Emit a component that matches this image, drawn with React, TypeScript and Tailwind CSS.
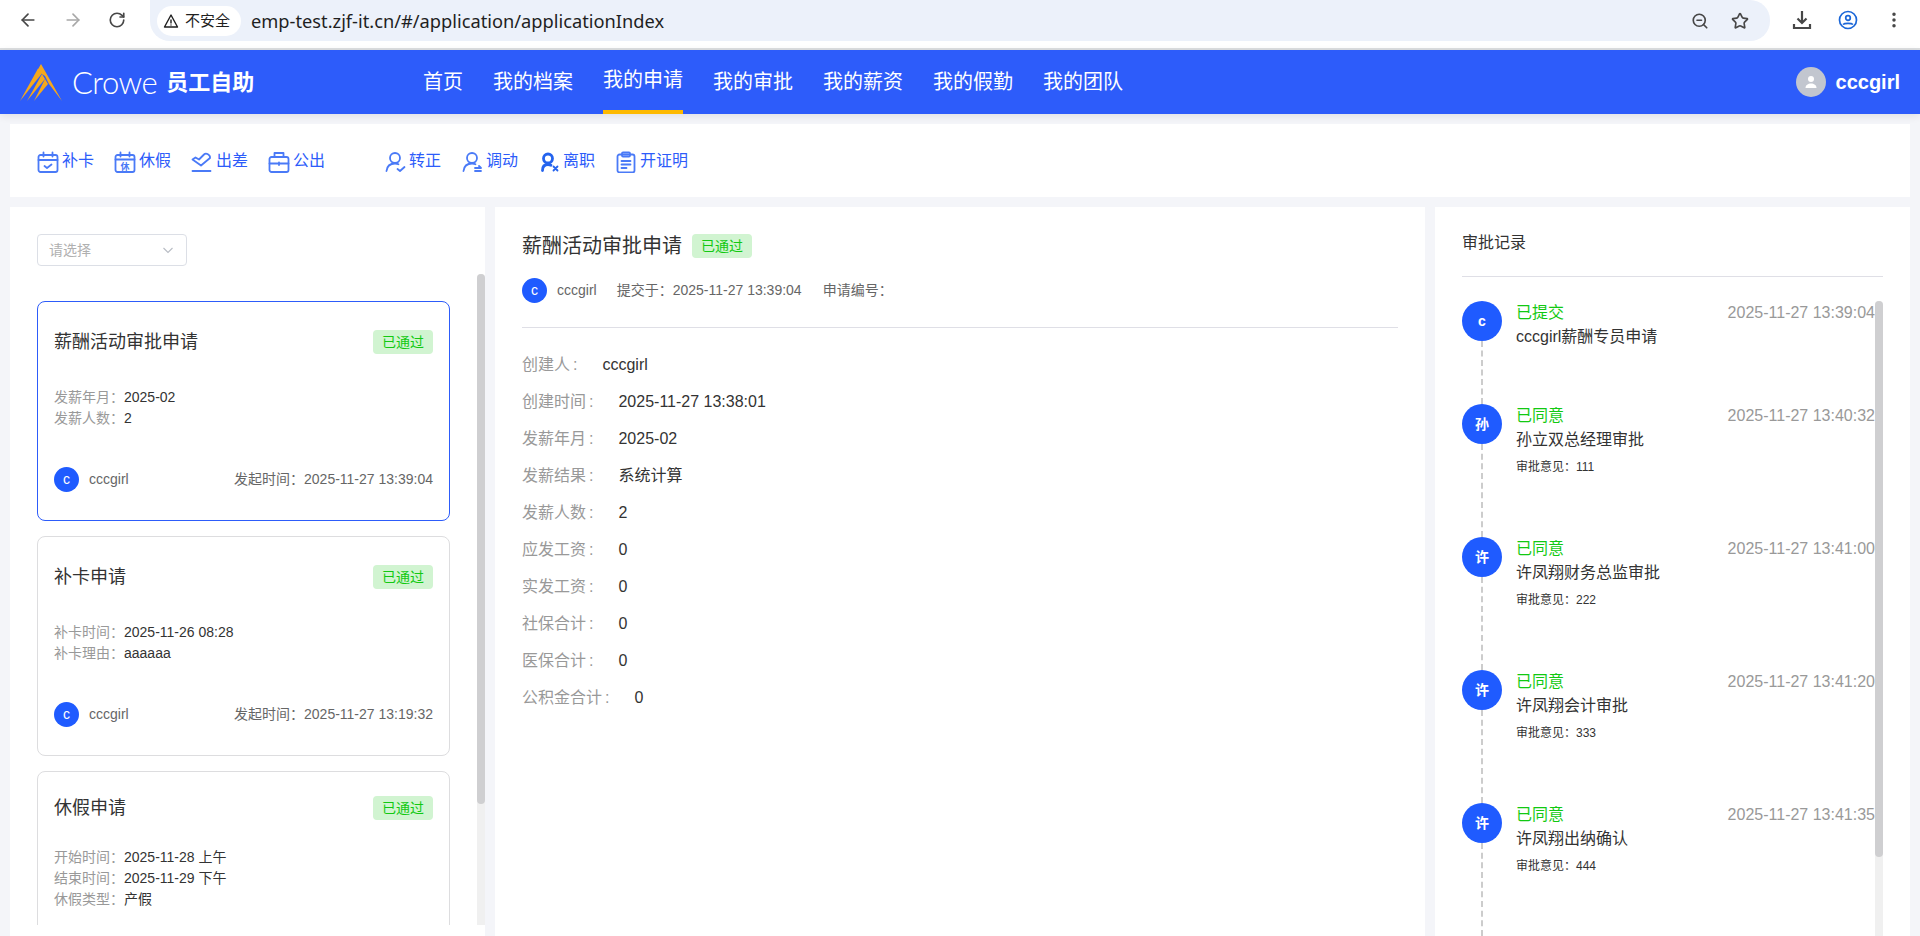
import React from "react";
import { ArrowLeft, ArrowRight, RotateCw, ZoomOut, Star, EllipsisVertical } from "lucide-react";

const Badge = () => (
  <span className="inline-flex h-[24px] w-[60px] shrink-0 items-center justify-center rounded-[4px] bg-[#d1f4d1] text-[14px] text-[#12c912]">
    已通过
  </span>
);

const Avatar = ({ t, big }: { t: string; big?: boolean }) => (
  <span
    className={
      big
        ? "flex h-[40px] w-[40px] shrink-0 items-center justify-center rounded-full bg-[#1f5bff] text-[14px] font-bold text-white"
        : "flex h-[25px] w-[25px] shrink-0 items-center justify-center rounded-full bg-[#1f5bff] text-[14px] text-white"
    }
  >
    {t}
  </span>
);

const Ic = ({ children }: { children: React.ReactNode }) => (
  <svg width="22" height="22" viewBox="0 0 22 22" fill="none" stroke="#4a7af7" strokeWidth="1.800" strokeLinecap="round" strokeLinejoin="round" className="shrink-0">
    {children}
  </svg>
);

const tools1: [string, React.ReactNode][] = [
  ["补卡", <Ic><rect x="1.500" y="4" width="19" height="17" rx="2" /><path d="M1.500 9h19M6.500 1.500v4M15.500 1.500v4M7.500 15l2.500 2 4.500-3.500" /></Ic>],
  ["休假", <Ic><rect x="1.500" y="4" width="19" height="17" rx="2" /><path d="M1.500 8.500h19M6.500 1.500v4M15.500 1.500v4" /><text x="11" y="18.500" textAnchor="middle" fontSize="9" fontWeight="700" fill="#4a7af7" stroke="none">休</text></Ic>],
  ["出差", <Ic><path d="M1.500 8.500L4.500 6.500 8 8.500 13 3.500C15 1.500 19.500 3.500 19 7L10 14.500z" /><path d="M1.500 20h18" /></Ic>],
  ["公出", <Ic><rect x="1.500" y="6" width="19" height="15" rx="2" /><path d="M6.500 6V2h9v4M1.500 12.500h19M11 11.500v2.500" /></Ic>],
];

const tools2: [string, React.ReactNode][] = [
  ["转正", <Ic><circle cx="11" cy="7" r="5" /><path d="M2.500 20c.5-4.500 3.500-7.500 8.500-7.500 1.500 0 2.500.2 3.500.7M13.500 18l2.500 2 4.500-4" /></Ic>],
  ["调动", <Ic><circle cx="11" cy="7" r="5" /><path d="M2.500 20c.5-4.500 3.500-7.500 8.500-7.500 1.500 0 2.500.2 3.500.7M14 17h6l-2-2M20 20h-6" /></Ic>],
  ["离职", <svg width="22" height="22" viewBox="0 0 22 22" fill="none" stroke="#2463ee" strokeWidth="2.800" strokeLinecap="round" strokeLinejoin="round" className="shrink-0"><circle cx="10" cy="7.500" r="4.500" /><path d="M4.500 19.500c0-4 2-6 5.500-6 1 0 2 .2 3 .7" /><path d="M15.500 15.500l4 4M19.500 15.500l-4 4" strokeWidth="1.800" /></svg>],
  ["开证明", <Ic><rect x="2.500" y="3.500" width="17" height="18" rx="2" /><rect x="7" y="1.500" width="8" height="4" rx="1" /><path d="M6.500 10h9M6.500 13.500h9M6.500 17h5" /></Ic>],
];

const Tool = ({ label, icon }: { label: string; icon: React.ReactNode }) => (
  <div className="flex items-center gap-[3px]">
    <span className="mt-[3px] flex">{icon}</span>
    <span className="text-[16px] leading-[22px] text-[#2d5cfa]">{label}</span>
  </div>
);

type Card = {
  title: string;
  lines: [string, string][];
  time?: string;
  active?: boolean;
  tall?: boolean;
};

const cards: Card[] = [
  { title: "薪酬活动审批申请", lines: [["发薪年月", "2025-02"], ["发薪人数", "2"]], time: "2025-11-27 13:39:04", active: true },
  { title: "补卡申请", lines: [["补卡时间", "2025-11-26 08:28"], ["补卡理由", "aaaaaa"]], time: "2025-11-27 13:19:32" },
  { title: "休假申请", lines: [["开始时间", "2025-11-28 上午"], ["结束时间", "2025-11-29 下午"], ["休假类型", "产假"]], tall: true },
];

const ListCard = ({ c }: { c: Card }) => (
  <div
    className={
      (c.active ? "border-[#2d5cfa] " : "border-[#dddddf] ") +
      (c.tall ? "pt-[24px] " : "pt-[28px] ") +
      "flex h-[220px] shrink-0 flex-col rounded-[8px] border bg-white px-[16px] pb-[28px]"
    }
  >
    <div className="flex h-[24px] items-center justify-between">
      <span className="text-[18px] text-[#333333]">{c.title}</span>
      <Badge />
    </div>
    <div className={c.tall ? "mt-[27px]" : "mt-[33px]"}>
      {c.lines.map(([k, v]) => (
        <div key={k} className="text-[14px] leading-[21px]">
          <span className="text-[#999999]">{k}：</span>
          <span className="text-[#333333]">{v}</span>
        </div>
      ))}
    </div>
    {c.time && (
      <div className="mt-auto flex items-center justify-between text-[14px] text-[#666666]">
        <div className="flex items-center gap-[10px]">
          <Avatar t="c" />
          <span>cccgirl</span>
        </div>
        <span>发起时间：{c.time}</span>
      </div>
    )}
  </div>
);

const details: [string, string][] = [
  ["创建人", "cccgirl"],
  ["创建时间", "2025-11-27 13:38:01"],
  ["发薪年月", "2025-02"],
  ["发薪结果", "系统计算"],
  ["发薪人数", "2"],
  ["应发工资", "0"],
  ["实发工资", "0"],
  ["社保合计", "0"],
  ["医保合计", "0"],
  ["公积金合计", "0"],
];

type Rec = { a: string; status: string; time: string; name: string; note?: string };
const records: Rec[] = [
  { a: "c", status: "已提交", time: "2025-11-27 13:39:04", name: "cccgirl薪酬专员申请" },
  { a: "孙", status: "已同意", time: "2025-11-27 13:40:32", name: "孙立双总经理审批", note: "审批意见：111" },
  { a: "许", status: "已同意", time: "2025-11-27 13:41:00", name: "许凤翔财务总监审批", note: "审批意见：222" },
  { a: "许", status: "已同意", time: "2025-11-27 13:41:20", name: "许凤翔会计审批", note: "审批意见：333" },
  { a: "许", status: "已同意", time: "2025-11-27 13:41:35", name: "许凤翔出纳确认", note: "审批意见：444" },
];

const Record = ({ r }: { r: Rec }) => (
  <div className={(r.note ? "h-[133px] " : "h-[103px] ") + "flex shrink-0 gap-[14px]"}>
    <div className="flex w-[40px] shrink-0 flex-col items-center">
      <Avatar t={r.a} big />
      <div className="w-0 flex-1 border-l-2 border-dashed border-[#cccccc]" />
    </div>
    <div className="min-w-0 flex-1">
      <div className="flex justify-between text-[16px] leading-[24px]">
        <span className="text-[#12c912]">{r.status}</span>
        <span className="text-[#999999]">{r.time}</span>
      </div>
      <div className="text-[16px] leading-[24px] text-[#333333]">{r.name}</div>
      {r.note && <div className="mt-[6px] text-[12px] leading-[18px] text-[#333333]">{r.note}</div>}
    </div>
  </div>
);

export default function App() {
  return (
    <div className="flex h-[936px] flex-col overflow-hidden bg-[#f4f5f9] font-['Liberation_Sans','Noto_Sans_CJK_SC',sans-serif]">
      {/* browser bar */}
      <div className="flex h-[50px] shrink-0 border-b-2 border-[#dcdee0] bg-white">
        <div className="flex w-[150px] shrink-0 items-center gap-[25px] pb-[8px] pl-[18px]">
          <ArrowLeft size={20} color="#474747" strokeWidth={2} />
          <ArrowRight size={20} color="#a8a8a8" strokeWidth={2} />
          <RotateCw size={18} color="#474747" strokeWidth={2.200} />
        </div>
        <div className="flex h-[41px] w-[1620px] shrink-0 items-center rounded-b-[20px] rounded-tr-[20px] bg-[#ecf1fa] pl-[7px]">
          <div className="flex h-[30px] w-[84px] items-center gap-[6px] rounded-full bg-white pl-[6px] text-[15px] text-[#1f1f1f]">
            <svg width="16" height="16" viewBox="0 0 16 16" fill="none" stroke="#1f1f1f" strokeWidth="1.400" strokeLinejoin="round" className="shrink-0">
              <path d="M8 2L1.500 14h13z" />
              <path d="M8 6.500v4M8 11.500v1" />
            </svg>
            <span className="mt-[2px] whitespace-nowrap">不安全</span>
          </div>
          <span className="ml-[10px] font-['Noto_Sans','Liberation_Sans',sans-serif] text-[18.250px] text-[#1f1f1f]">emp-test.zjf-it.cn/#/application/applicationIndex</span>
          <div className="ml-auto mr-[21px] flex items-center gap-[22px]">
            <ZoomOut size={18} color="#474747" strokeWidth={2.200} />
            <Star size={18} color="#474747" strokeWidth={2.200} />
          </div>
        </div>
        <div className="flex flex-1 items-center gap-[26px] pb-[8px] pl-[22px]">
          <svg width="20" height="20" viewBox="0 0 20 20" fill="none" stroke="#474747" strokeWidth="2.200" className="shrink-0">
            <path d="M10 1v12M5.500 8.500L10 13l4.500-4.500M2 14v4h16v-4" />
          </svg>
          <svg width="20" height="20" viewBox="0 0 20 20" fill="none" stroke="#1a66d8" strokeWidth="1.700" className="shrink-0">
            <circle cx="10" cy="10" r="8.500" />
            <circle cx="10" cy="8" r="2.300" />
            <path d="M5 14.500c1.500-1.500 8.500-1.500 10 0" />
          </svg>
          <EllipsisVertical size={20} color="#474747" strokeWidth={2.200} />
        </div>
      </div>

      {/* header */}
      <header className="relative flex h-[64px] shrink-0 items-stretch bg-[#2d5cfa] shadow-[0_2px_8px_rgba(0,0,0,0.09)]">
        <div className="flex w-[423px] shrink-0 items-center pl-[20px]">
          <svg width="42" height="37" viewBox="0 0 42 37" fill="#f5a81c" className="shrink-0">
            <path d="M21 0L42 37 29 20 25 12 17 7z" />
            <path d="M18 4.500L21.500 10 0 37z" />
            <path d="M22 10L25 15 7 37z" />
            <path d="M25 15L28 20 14 37z" />
          </svg>
          <span className="ml-[10px] font-['Lato','Liberation_Sans',sans-serif] text-[31px] leading-none font-light tracking-[-0.5px] text-white">Crowe</span>
          <span className="ml-[9px] text-[22px] font-bold text-white">员工自助</span>
        </div>
        <nav className="flex items-stretch gap-[30px] text-[20px] text-white">
          <span className="flex items-center">首页</span>
          <span className="flex items-center">我的档案</span>
          <span className="flex items-center border-b-4 border-[#fdb900]">我的申请</span>
          <span className="flex items-center">我的审批</span>
          <span className="flex items-center">我的薪资</span>
          <span className="flex items-center">我的假勤</span>
          <span className="flex items-center">我的团队</span>
        </nav>
        <div className="ml-auto flex items-center gap-[10px] pr-[20px]">
          <span className="flex h-[30px] w-[30px] items-center justify-center rounded-full bg-[#c2c6cf]">
            <svg width="16" height="16" viewBox="0 0 16 16" fill="white">
              <circle cx="8" cy="5" r="3" />
              <path d="M2.500 14c0-3 2.500-4.500 5.500-4.500s5.500 1.500 5.500 4.500z" />
            </svg>
          </span>
          <span className="text-[20px] font-bold text-white">cccgirl</span>
        </div>
      </header>

      {/* toolbar */}
      <div className="mx-[10px] mt-[10px] flex h-[73px] shrink-0 items-center bg-white pl-[27px]">
        <div className="flex gap-[20px]">
          {tools1.map(([l, i]) => <Tool key={l} label={l} icon={i} />)}
        </div>
        <div className="ml-[59px] flex gap-[20px]">
          {tools2.map(([l, i]) => <Tool key={l} label={l} icon={i} />)}
        </div>
      </div>

      {/* panels */}
      <div className="mx-[10px] mt-[10px] flex min-h-0 flex-1 gap-[10px]">
        {/* left */}
        <div className="flex w-[475px] shrink-0 flex-col bg-white pb-[11px]">
          <div className="ml-[27px] mt-[27px] flex h-[32px] w-[150px] shrink-0 items-center justify-between rounded-[4px] border border-[#dcdfe6] pl-[11px] pr-[12px] text-[14px] text-[#b0b0b0]">
            <span>请选择</span>
            <svg width="12" height="12" viewBox="0 0 12 12" fill="none" stroke="#b8bcc4" strokeWidth="1.100">
              <path d="M1.500 4l4.500 4.500L10.500 4" />
            </svg>
          </div>
          <div className="mt-[8px] flex min-h-0 flex-1 overflow-hidden">
            <div className="ml-[27px] flex w-[413px] shrink-0 flex-col gap-[15px] pt-[27px]">
              {cards.map((c) => <ListCard key={c.title} c={c} />)}
            </div>
            <div className="ml-auto h-full w-[8px] rounded-t-[4px] bg-[#f0f0f0]">
              <div className="h-[530px] rounded-[4px] bg-[#cfcfd1]" />
            </div>
          </div>
        </div>

        {/* middle */}
        <div className="flex w-[930px] shrink-0 flex-col bg-white px-[27px]">
          <div className="mt-[27px] flex h-[24px] items-center gap-[10px]">
            <span className="text-[20px] text-[#333333]">薪酬活动审批申请</span>
            <Badge />
          </div>
          <div className="mt-[20px] flex h-[25px] items-center text-[14px] text-[#666666]">
            <Avatar t="c" />
            <span className="ml-[10px]">cccgirl</span>
            <span className="ml-[20px]">提交于：2025-11-27 13:39:04</span>
            <span className="ml-[21px]">申请编号：</span>
          </div>
          <div className="mt-[24px] h-px bg-[#dfdfe6]" />
          <div className="mt-[18px]">
            {details.map(([k, v]) => (
              <div key={k} className="flex h-[37px] items-center text-[16px]">
                <span className="mr-[25px] text-[#999999]">
                  {k}
                  <span className="ml-[3px]">:</span>
                </span>
                <span className="text-[#333333]">{v}</span>
              </div>
            ))}
          </div>
        </div>

        {/* right */}
        <div className="flex min-w-0 flex-1 flex-col bg-white px-[27px]">
          <div className="flex h-[70px] shrink-0 items-center border-b border-[#dfdfe6] text-[16px] text-[#333333]">
            <span className="mt-[3px]">审批记录</span>
          </div>
          <div className="mt-[24px] flex min-h-0 flex-1 overflow-hidden">
            <div className="flex min-w-0 flex-1 flex-col">
              {records.map((r, i) => <Record key={i} r={r} />)}
              <div className="ml-[19px] flex-1 border-l-2 border-dashed border-[#cccccc]" />
            </div>
            <div className="h-full w-[8px] rounded-t-[4px] bg-[#f0f0f0]">
              <div className="h-[556px] rounded-[4px] bg-[#cfcfd1]" />
            </div>
          </div>
        </div>
      </div>
    </div>
  );
}
